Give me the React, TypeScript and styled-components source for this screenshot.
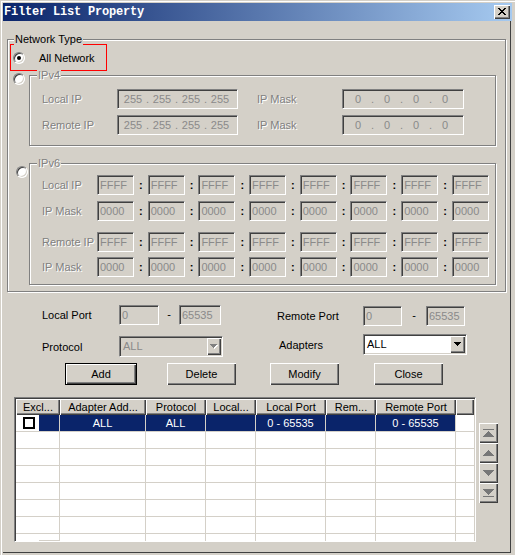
import React from "react";
import styled, { createGlobalStyle, css } from "styled-components";

const FACE = "#D4D0C8";
const SHADOW = "#808080";
const DARK = "#404040";
const NAVY = "#0A246A";
const GRAY_TEXT = "#8a8a8a";

const GlobalStyle = createGlobalStyle`
  html, body { margin: 0; padding: 0; background: ${FACE}; }
  body { font-family: "Liberation Sans", Arial, sans-serif; font-size: 11px; color: #000; }
  *, *::before, *::after { box-sizing: border-box; }
`;

const raised = css`
  background: ${FACE};
  box-shadow: inset 1px 1px 0 #fff, inset -1px -1px 0 ${DARK}, inset -2px -2px 0 ${SHADOW};
`;

const sunken = css`
  border: 1px solid;
  border-color: ${SHADOW} #fff #fff ${SHADOW};
  box-shadow: inset 1px 1px 0 ${DARK}, inset -1px -1px 0 ${FACE};
`;

const Window = styled.div`
  width: 515px;
  height: 555px;
  background: ${FACE};
  padding: 3px 3px 0 3px;
  box-shadow: inset 1px 1px 0 ${FACE}, inset 2px 2px 0 #fff;
  display: flex;
  flex-direction: column;
  overflow: hidden;
`;

const TitleBar = styled.div`
  flex: none;
  width: 509px;
  height: 18px;
  background: linear-gradient(to right, #0a246a, #a6caf0);
  display: flex;
  align-items: center;
  justify-content: space-between;
  padding: 0 2px 0 1px;
`;

const TitleText = styled.span`
  font-family: "Liberation Mono", "Courier New", monospace;
  font-weight: bold;
  font-size: 12px;
  letter-spacing: -0.2px;
  color: #fff;
  line-height: 18px;
`;

const CloseButton = styled.span`
  ${raised};
  width: 16px;
  height: 14px;
  display: flex;
  align-items: center;
  justify-content: center;
  padding-bottom: 1px;
`;

const Body = styled.div`
  flex: none;
  width: 508px;
  height: 532px;
  border-right: 1px solid ${DARK};
  border-bottom: 1px solid ${DARK};
  display: flex;
  flex-direction: column;
`;

const GroupBox = styled.div<{ $w: number; $h: number; $ml?: number; $mt?: number }>`
  position: relative;
  flex: none;
  width: ${(p) => p.$w}px;
  height: ${(p) => p.$h}px;
  margin-left: ${(p) => p.$ml ?? 0}px;
  margin-top: ${(p) => p.$mt ?? 0}px;
  border: 1px solid ${SHADOW};
  box-shadow: inset 1px 1px 0 #fff, 1px 1px 0 #fff;
`;

const GroupLabel = styled.span<{ $left: number; $disabled?: boolean }>`
  position: absolute;
  top: -7px;
  left: ${(p) => p.$left}px;
  padding: 0 1px;
  line-height: 13px;
  background: ${FACE};
  color: ${(p) => (p.$disabled ? SHADOW : "#000")};
  text-shadow: ${(p) => (p.$disabled ? "1px 1px 0 #fff" : "none")};
  white-space: nowrap;
`;

const GroupColumn = styled.div`
  display: flex;
  flex-direction: column;
`;

const Highlight = styled.div`
  margin: 4px 0 0 2px;
  width: 97px;
  height: 27px;
  border: 1px solid #ff0000;
  display: flex;
  align-items: center;
  padding-left: 2px;
`;

const OptionText = styled.span`
  margin-left: 14px;
  white-space: nowrap;
`;

const OptionRow = styled.div<{ $mt: number }>`
  display: flex;
  align-items: flex-start;
  margin-top: ${(p) => p.$mt}px;
`;

const Radio = styled.span<{ $checked?: boolean; $ml?: number; $mt?: number }>`
  position: relative;
  flex: none;
  width: 12px;
  height: 12px;
  margin-left: ${(p) => p.$ml ?? 0}px;
  margin-top: ${(p) => p.$mt ?? 0}px;
  border-radius: 50%;
  border: 1px solid;
  border-color: ${SHADOW} #fff #fff ${SHADOW};
  box-shadow: inset 1px 1px 0 ${DARK}, inset -1px -1px 0 ${FACE};
  background: #fff;
  ${(p) =>
    p.$checked &&
    css`
      &::after {
        content: "";
        position: absolute;
        left: 3px;
        top: 3px;
        width: 4px;
        height: 4px;
        border-radius: 50%;
        background: #000;
      }
    `}
`;

const FormRows = styled.div<{ $pt: number }>`
  display: flex;
  flex-direction: column;
  padding: ${(p) => p.$pt}px 0 0 12px;
`;

const FormRow = styled.div<{ $mt?: number }>`
  display: flex;
  align-items: center;
  height: 20px;
  margin-top: ${(p) => p.$mt ?? 0}px;
`;

const DimLabel = styled.span<{ $w: number; $ml?: number }>`
  flex: none;
  width: ${(p) => p.$w}px;
  margin-left: ${(p) => p.$ml ?? 0}px;
  color: ${SHADOW};
  text-shadow: 1px 1px 0 #fff;
  white-space: nowrap;
`;

const Label = styled.span<{ $w: number; $ml?: number }>`
  flex: none;
  width: ${(p) => p.$w}px;
  margin-left: ${(p) => p.$ml ?? 0}px;
  white-space: nowrap;
`;

const Edit = styled.div<{ $w: number; $pad?: number }>`
  ${sunken};
  flex: none;
  width: ${(p) => p.$w}px;
  height: 20px;
  background: ${FACE};
  color: ${GRAY_TEXT};
  padding-left: ${(p) => p.$pad ?? 2}px;
  display: flex;
  align-items: center;
  white-space: nowrap;
  overflow: hidden;
`;

const Octet = styled.span`
  width: 20px;
  text-align: center;
`;

const Dot = styled.span`
  width: 9px;
  text-align: center;
`;

const HexFields = styled.div`
  width: 392px;
  display: flex;
  align-items: center;
  justify-content: space-between;
`;

const Colon = styled.span`
  width: 10px;
  text-align: center;
  font-weight: bold;
  color: #000;
`;

const PortRow = styled.div<{ $mt: number; $pl: number }>`
  flex: none;
  display: flex;
  align-items: flex-start;
  margin-top: ${(p) => p.$mt}px;
  padding-left: ${(p) => p.$pl}px;
`;

const PortGroup = styled.div<{ $ml?: number; $mt?: number }>`
  display: flex;
  align-items: center;
  margin-left: ${(p) => p.$ml ?? 0}px;
  margin-top: ${(p) => p.$mt ?? 0}px;
`;

const Dash = styled.span<{ $w: number }>`
  width: ${(p) => p.$w}px;
  text-align: center;
  margin-top: -2px;
`;

const Combo = styled.div<{ $enabled?: boolean }>`
  ${sunken};
  flex: none;
  width: 104px;
  height: 21px;
  padding: 1px;
  display: flex;
  background: ${(p) => (p.$enabled ? "#fff" : FACE)};
`;

const ComboText = styled.span<{ $enabled?: boolean }>`
  flex: 1;
  padding-left: 2px;
  line-height: 17px;
  color: ${(p) => (p.$enabled ? "#000" : GRAY_TEXT)};
`;

const ComboButton = styled.span<{ $w: number }>`
  ${raised};
  flex: none;
  width: ${(p) => p.$w}px;
  display: flex;
  align-items: center;
  justify-content: center;
`;

const Button = styled.button<{ $w: number; $ml: number; $default?: boolean }>`
  ${raised};
  flex: none;
  width: ${(p) => p.$w}px;
  height: 22px;
  margin-left: ${(p) => p.$ml}px;
  border: ${(p) => (p.$default ? "1px solid #000" : "none")};
  padding: 0;
  font-family: "Liberation Sans", Arial, sans-serif;
  font-size: 11px;
  color: #000;
`;

const TableArea = styled.div`
  flex: none;
  display: flex;
  align-items: flex-start;
  margin-top: 12px;
  padding-left: 11px;
`;

const Table = styled.div`
  ${sunken};
  flex: none;
  width: 462px;
  height: 145px;
  padding: 1px;
  background: #fff;
  overflow: hidden;
  display: flex;
  flex-direction: column;
`;

const HeaderRow = styled.div`
  flex: none;
  display: flex;
  height: 16px;
`;

const HeaderCell = styled.div<{ $w?: number }>`
  ${raised};
  flex: ${(p) => (p.$w ? "none" : "1")};
  width: ${(p) => (p.$w ? `${p.$w}px` : "auto")};
  line-height: 16px;
  text-align: center;
  white-space: nowrap;
  overflow: hidden;
`;

const Row = styled.div`
  flex: none;
  display: flex;
  height: 17px;
`;

const Cell = styled.div<{ $w?: number; $sel?: boolean }>`
  flex: ${(p) => (p.$w ? "none" : "1")};
  width: ${(p) => (p.$w ? `${p.$w}px` : "auto")};
  border-right: ${(p) => (p.$w ? `1px solid ${FACE}` : "none")};
  border-bottom: 1px solid ${FACE};
  background: ${(p) => (p.$sel ? NAVY : "#fff")};
  color: ${(p) => (p.$sel ? "#fff" : "#000")};
  line-height: 16px;
  text-align: center;
  white-space: nowrap;
  overflow: hidden;
  display: flex;
  justify-content: center;
`;

const CheckCell = styled.div<{ $w: number }>`
  flex: none;
  width: ${(p) => p.$w}px;
  display: flex;
  border-right: 1px solid ${FACE};
  border-bottom: 1px solid ${FACE};
`;

const CheckArea = styled.div`
  flex: none;
  width: 23px;
  background: #fff;
  padding: 2px 0 0 7px;
`;

const CheckBox = styled.span`
  display: block;
  width: 12px;
  height: 12px;
  border: 2px solid #000;
  background: #fff;
`;

const SelFill = styled.div`
  flex: 1;
  background: ${NAVY};
`;

const SideButtons = styled.div`
  flex: none;
  display: flex;
  flex-direction: column;
  margin: 26px 0 0 3px;
`;

const SideButton = styled.span`
  ${raised};
  width: 19px;
  height: 20px;
  display: flex;
  align-items: center;
  justify-content: center;
`;

/* ---------- icons ---------- */

const CloseGlyph = () => {
  const rows: [number, number][][] = [
    [[0, 2], [6, 2]],
    [[1, 2], [5, 2]],
    [[2, 4]],
    [[3, 2]],
    [[2, 4]],
    [[1, 2], [5, 2]],
    [[0, 2], [6, 2]],
  ];
  return (
    <svg width="8" height="7" viewBox="0 0 8 7" shapeRendering="crispEdges">
      {rows.flatMap((segs, y) =>
        segs.map(([x, w], i) => <rect key={`${y}-${i}`} x={x} y={y} width={w} height={1} fill="#000" />)
      )}
    </svg>
  );
};

const ComboArrow = ({ disabled }: { disabled?: boolean }) => {
  const rows = [
    [0, 7],
    [1, 5],
    [2, 3],
    [3, 1],
  ];
  return (
    <svg width="8" height="5" viewBox="0 0 8 5" shapeRendering="crispEdges">
      {disabled &&
        rows.map(([x, w], y) => <rect key={`s${y}`} x={x + 1} y={y + 1} width={w} height={1} fill="#fff" />)}
      {rows.map(([x, w], y) => (
        <rect key={y} x={x} y={y} width={w} height={1} fill={disabled ? SHADOW : "#000"} />
      ))}
    </svg>
  );
};

type SideKind = "top" | "up" | "down" | "bottom";

const SideIcon = ({ kind }: { kind: SideKind }) => {
  const color = "#777";
  const widths = [1, 3, 5, 7, 9, 11];
  const up = kind === "top" || kind === "up";
  const triTop = kind === "top" ? 2 : 0;
  const tri = widths.map((w, i) => (
    <rect key={i} x={(11 - w) / 2} y={triTop + (up ? i : 5 - i)} width={w} height={1} fill={color} />
  ));
  const h = kind === "top" || kind === "bottom" ? 8 : 6;
  return (
    <svg width="11" height={h} viewBox={`0 0 11 ${h}`} shapeRendering="crispEdges">
      {kind === "top" && <rect x={0} y={0} width={11} height={1} fill={color} />}
      {tri}
      {kind === "bottom" && <rect x={0} y={7} width={11} height={1} fill={color} />}
    </svg>
  );
};

/* ---------- parts ---------- */

const IpValue = ({ value }: { value: string }) => {
  const parts = value.split(".");
  return (
    <>
      {parts.map((p, i) => (
        <React.Fragment key={i}>
          {i > 0 && <Dot>.</Dot>}
          <Octet>{p}</Octet>
        </React.Fragment>
      ))}
    </>
  );
};

const HexRow = ({ label, value, mt }: { label: string; value: string; mt?: number }) => (
  <FormRow $mt={mt}>
    <DimLabel $w={55}>{label}</DimLabel>
    <HexFields>
      {Array.from({ length: 8 }).map((_, i) => (
        <React.Fragment key={i}>
          {i > 0 && <Colon>:</Colon>}
          <Edit $w={37}>{value}</Edit>
        </React.Fragment>
      ))}
    </HexFields>
  </FormRow>
);

const columns = [
  { title: "Excl...", w: 44 },
  { title: "Adapter Add...", w: 86 },
  { title: "Protocol", w: 60 },
  { title: "Local...", w: 50 },
  { title: "Local Port", w: 70 },
  { title: "Rem...", w: 50 },
  { title: "Remote Port", w: 80 },
];

const firstRow = ["", "ALL", "ALL", "", "0 - 65535", "", "0 - 65535"];

export default function App() {
  return (
    <>
      <GlobalStyle />
      <Window>
        <TitleBar>
          <TitleText>Filter List Property</TitleText>
          <CloseButton>
            <CloseGlyph />
          </CloseButton>
        </TitleBar>
        <Body>
          <GroupBox $w={499} $h={253} $ml={4} $mt={18}>
            <GroupLabel $left={6}>Network Type</GroupLabel>
            <GroupColumn>
              <Highlight>
                <Radio $checked />
                <OptionText>All Network</OptionText>
              </Highlight>

              <OptionRow $mt={2}>
                <Radio $ml={5} />
                <GroupBox $w={467} $h={71} $ml={4} $mt={2}>
                  <GroupLabel $left={7} $disabled>
                    IPv4
                  </GroupLabel>
                  <FormRows $pt={13}>
                    <FormRow>
                      <DimLabel $w={75}>Local IP</DimLabel>
                      <Edit $w={121} $pad={5}>
                        <IpValue value="255.255.255.255" />
                      </Edit>
                      <DimLabel $w={85} $ml={19}>
                        IP Mask
                      </DimLabel>
                      <Edit $w={122} $pad={5}>
                        <IpValue value="0.0.0.0" />
                      </Edit>
                    </FormRow>
                    <FormRow $mt={6}>
                      <DimLabel $w={75}>Remote IP</DimLabel>
                      <Edit $w={121} $pad={5}>
                        <IpValue value="255.255.255.255" />
                      </Edit>
                      <DimLabel $w={85} $ml={19}>
                        IP Mask
                      </DimLabel>
                      <Edit $w={122} $pad={5}>
                        <IpValue value="0.0.0.0" />
                      </Edit>
                    </FormRow>
                  </FormRows>
                </GroupBox>
              </OptionRow>

              <OptionRow $mt={17}>
                <Radio $ml={8} $mt={3} />
                <GroupBox $w={467} $h={122} $ml={1}>
                  <GroupLabel $left={7} $disabled>
                    IPv6
                  </GroupLabel>
                  <FormRows $pt={11}>
                    <HexRow label="Local IP" value="FFFF" />
                    <HexRow label="IP Mask" value="0000" mt={6} />
                    <HexRow label="Remote IP" value="FFFF" mt={11} />
                    <HexRow label="IP Mask" value="0000" mt={5} />
                  </FormRows>
                </GroupBox>
              </OptionRow>
            </GroupColumn>
          </GroupBox>

          <PortRow $mt={13} $pl={39}>
            <PortGroup>
              <Label $w={77}>Local Port</Label>
              <Edit $w={40}>0</Edit>
              <Dash $w={20}>-</Dash>
              <Edit $w={42}>65535</Edit>
            </PortGroup>
            <PortGroup $ml={56} $mt={1}>
              <Label $w={86}>Remote Port</Label>
              <Edit $w={39}>0</Edit>
              <Dash $w={24}>-</Dash>
              <Edit $w={39}>65535</Edit>
            </PortGroup>
          </PortRow>

          <PortRow $mt={8} $pl={39}>
            <PortGroup $mt={2}>
              <Label $w={77}>Protocol</Label>
              <Combo>
                <ComboText>ALL</ComboText>
                <ComboButton $w={14}>
                  <ComboArrow disabled />
                </ComboButton>
              </Combo>
            </PortGroup>
            <PortGroup $ml={56}>
              <Label $w={84}>Adapters</Label>
              <Combo $enabled>
                <ComboText $enabled>ALL</ComboText>
                <ComboButton $w={15}>
                  <ComboArrow />
                </ComboButton>
              </Combo>
            </PortGroup>
          </PortRow>

          <PortRow $mt={6} $pl={0}>
            <Button $w={72} $ml={62} $default>
              Add
            </Button>
            <Button $w={69} $ml={30}>
              Delete
            </Button>
            <Button $w={69} $ml={34}>
              Modify
            </Button>
            <Button $w={69} $ml={35}>
              Close
            </Button>
          </PortRow>

          <TableArea>
            <Table>
              <HeaderRow>
                {columns.map((c) => (
                  <HeaderCell key={c.title} $w={c.w}>
                    {c.title}
                  </HeaderCell>
                ))}
                <HeaderCell />
              </HeaderRow>
              {Array.from({ length: 8 }).map((_, r) => (
                <Row key={r}>
                  {columns.map((c, ci) =>
                    ci === 0 ? (
                      <CheckCell key={ci} $w={c.w}>
                        <CheckArea>{r === 0 && <CheckBox />}</CheckArea>
                        {r === 0 ? <SelFill /> : null}
                      </CheckCell>
                    ) : (
                      <Cell key={ci} $w={c.w} $sel={r === 0}>
                        {r === 0 ? firstRow[ci] : ""}
                      </Cell>
                    )
                  )}
                  <Cell />
                </Row>
              ))}
            </Table>
            <SideButtons>
              <SideButton>
                <SideIcon kind="top" />
              </SideButton>
              <SideButton>
                <SideIcon kind="up" />
              </SideButton>
              <SideButton>
                <SideIcon kind="down" />
              </SideButton>
              <SideButton>
                <SideIcon kind="bottom" />
              </SideButton>
            </SideButtons>
          </TableArea>
        </Body>
      </Window>
    </>
  );
}
